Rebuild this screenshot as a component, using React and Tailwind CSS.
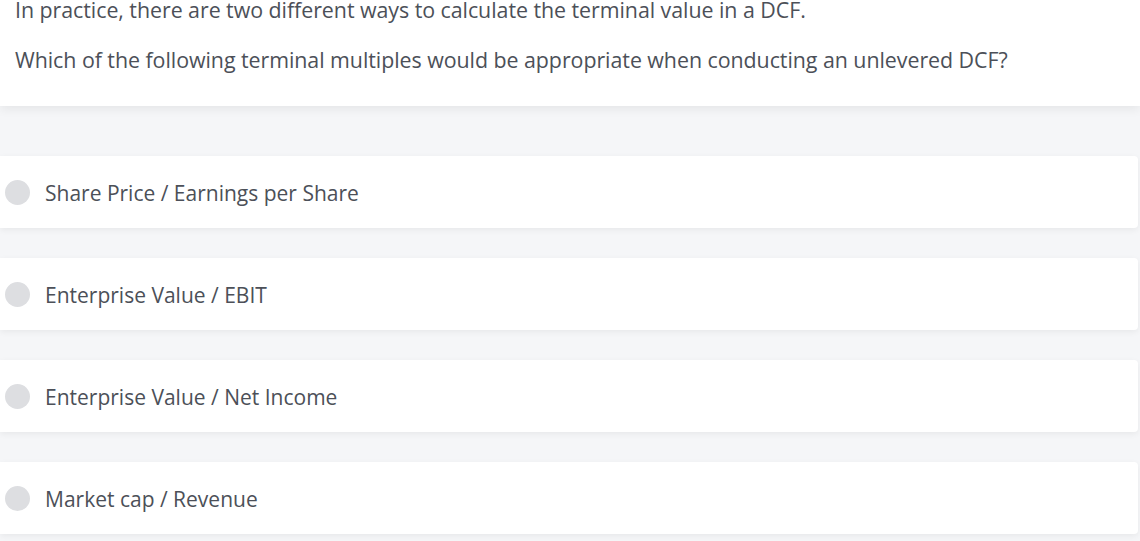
const options = [
  'Share Price / Earnings per Share',
  'Enterprise Value / EBIT',
  'Enterprise Value / Net Income',
  'Market cap / Revenue',
];

export default function App() {
  return (
    <div
      className="h-[541px] overflow-hidden bg-[#f5f6f8] text-[#4c5058]"
      style={{ fontFamily: '"Open Sans", "Noto Sans", sans-serif' }}
    >
      {/* question */}
      <div className="-mt-[5px] bg-white px-[15px] pb-[31px] shadow-[0_3px_10px_rgba(0,0,0,0.07)] relative">
        <p className="text-[21.4px] leading-[30px] tracking-[-0.05px]">
          In practice, there are two different ways to calculate the terminal value in a DCF.
        </p>
        <p className="mt-[20px] text-[21.4px] leading-[30px] tracking-[-0.05px]">
          Which of the following terminal multiples would be appropriate when conducting an unlevered DCF?
        </p>
      </div>

      {/* answers */}
      <div className="mt-[50px] flex flex-col gap-[30px] pr-[2px]">
        {options.map((o) => (
          <label
            key={o}
            className="flex h-[72px] items-center rounded-r-[4px] bg-white pl-[5px] shadow-[0_2px_6px_rgba(0,0,0,0.06)]"
          >
            <span className="h-[25px] w-[25px] shrink-0 rounded-full bg-[#dddee1]" />
            <span className="ml-[15px] pt-[3px] text-[21px]">{o}</span>
          </label>
        ))}
      </div>
    </div>
  );
}
